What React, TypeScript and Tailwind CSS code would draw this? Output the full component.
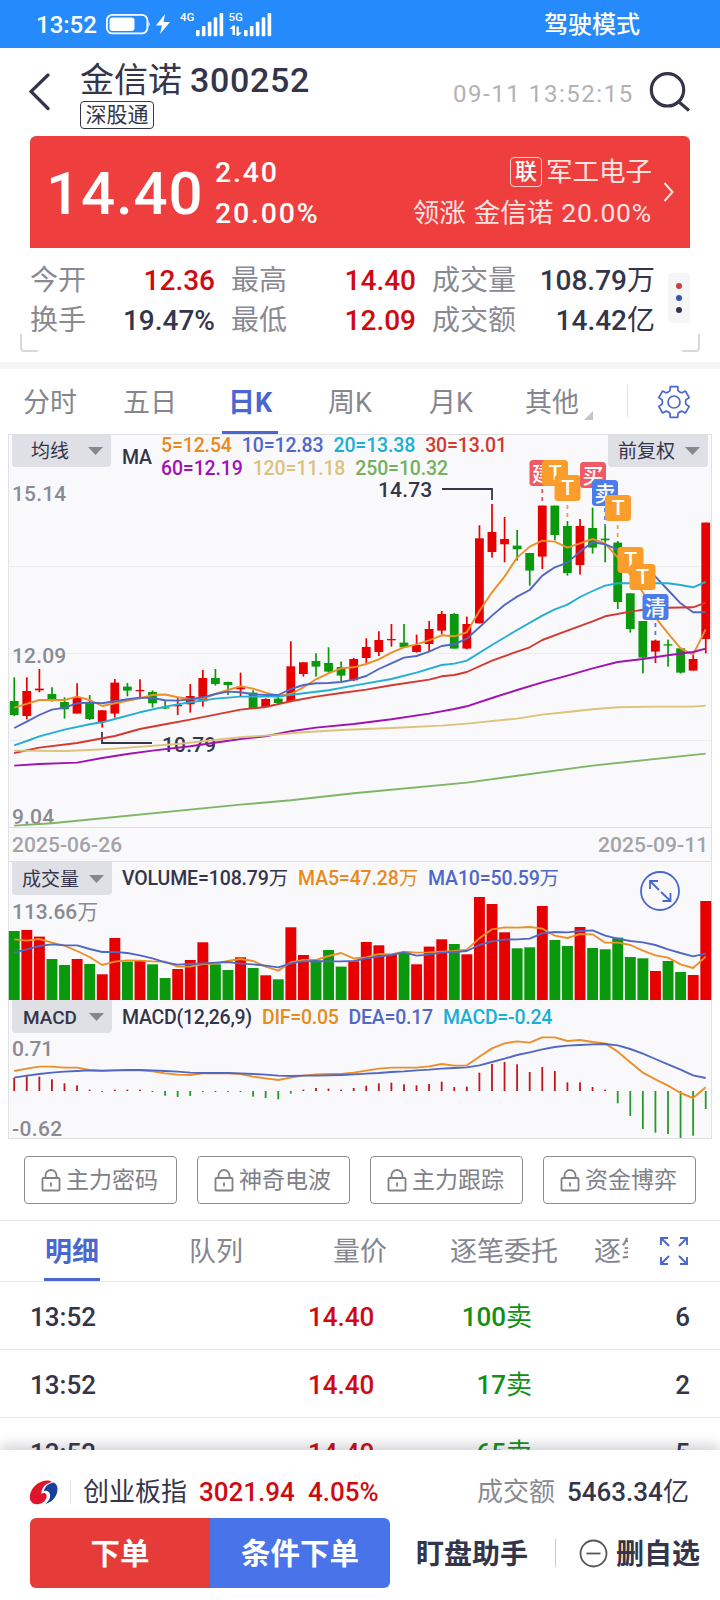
import type { ReactNode } from 'react';
import clsx from 'clsx';

const RED = '#e60000';
const GREEN = '#0a980c';
const ORANGE = '#ec8f28';
const BLUE = '#5068c4';
const CYAN = '#23aed2';

const X0 = 14.2;
const STEP = 12.573;
const cx = (i: number) => X0 + i * STEP;

// [up, high, body top, body bottom, low]
const candles: [number, number, number, number, number][] = [
  [0, 677.3, 701, 715, 716], [1, 677.3, 691, 716, 719.3], [1, 669, 688.6, 690.3, 692.3], [0, 687.3, 694, 699, 701.6],
  [0, 697.3, 702, 709.3, 718.6], [1, 683.3, 697.3, 713.6, 713.6], [0, 695, 702.3, 719, 720], [1, 710.3, 710.3, 722, 727.6],
  [1, 679, 682.6, 713.6, 717.6], [0, 683, 686.6, 690.6, 696.3], [1, 679.3, 690, 691.2, 697], [0, 690.3, 692, 703.3, 707.6],
  [0, 700, 707.3, 708.5, 709], [1, 697.3, 705, 706.3, 715], [1, 684, 696, 704.3, 712.6], [1, 670, 678, 701.3, 706.6],
  [0, 669, 678, 684, 685.6], [0, 681.6, 682, 685, 695], [1, 672.6, 686.8, 689.3, 696], [0, 690.3, 692.6, 708, 708.6],
  [1, 698.3, 699, 707, 707], [0, 696.6, 698.6, 703, 704.6], [1, 641.3, 666.3, 701, 702.3], [1, 662.3, 662.3, 674, 676.6],
  [0, 653.3, 661, 666.6, 676.6], [0, 647.3, 663, 671.6, 672.6], [0, 661.6, 667, 675.6, 681.6], [1, 658, 659, 680.3, 681],
  [1, 638.3, 647, 658, 663.3], [1, 631.3, 640, 652, 656], [1, 624, 639, 640.3, 646.6], [0, 624, 642.6, 647.3, 647.6],
  [1, 634.6, 645, 652, 652.6], [1, 621, 629, 644, 651.6], [1, 611, 614, 630.6, 634.3], [0, 613, 614, 648.6, 648.6],
  [1, 616.6, 624, 648.6, 649.3], [1, 525.3, 538.3, 623.3, 623.3], [1, 504, 532, 552, 557.6], [1, 517, 539, 544.3, 562.3],
  [0, 530, 545.6, 549.3, 560.6], [0, 553, 553, 570.6, 585.6], [1, 505.6, 505.6, 556.6, 569], [0, 505.6, 505.6, 535, 540.3],
  [0, 521, 526, 573, 575.6], [1, 519, 526, 565, 574.6], [0, 507.6, 528, 547.6, 553.6], [0, 526, 538.6, 540.3, 562.3],
  [0, 541, 542.6, 602, 609], [0, 593.3, 593.3, 629, 632.6], [0, 621, 621, 657.6, 673.3], [1, 639.6, 640.6, 651.6, 663],
  [0, 639.6, 644.3, 645.6, 666.6], [0, 647.6, 648.3, 672.6, 673.6], [1, 654, 659, 670.6, 670.6], [1, 522.6, 522.6, 639, 653.3],
];

type Point = [number, number];

const ma5: Point[] = [
  [0, 707.6], [2, 700], [4, 700], [5, 696.6], [6, 700], [7, 706], [8, 703.3], [10, 698.3], [11, 695], [12, 694.5], [13, 697.3], [14, 699],
  [15, 698.6], [16, 694], [17, 690], [18, 686.3], [19, 688.6], [20, 692.6], [21, 695.6], [22, 694], [23, 687.3], [24, 679.3],
  [25, 673.3], [26, 668.3], [27, 667.3], [28, 664], [29, 659.3], [30, 652.6], [31, 647.3], [32, 644.3], [33, 640.3], [34, 635.3],
  [35, 636.3], [36, 632.3], [37, 611], [38, 592.3], [39, 576.6], [40, 557.6], [41, 546.6], [42, 540.6], [43, 541.6], [44, 547.6],
  [45, 543.3], [46, 539], [47, 543.3], [48, 557.6], [49, 575], [50, 592.3], [51, 617.3], [52, 633.3], [53, 648.3], [54, 654.6], [55, 629.3],
];
const ma10: Point[] = [
  [0, 728], [1, 721.6], [2, 715], [3, 709.6], [4, 707.6], [5, 703.3], [6, 702.6], [7, 703.3], [8, 701.3], [9, 699.3], [10, 697.6],
  [11, 698], [12, 700.3], [13, 700.6], [14, 699.3], [15, 697.3], [16, 694], [17, 691.6], [18, 692.3], [19, 694.3], [20, 695], [21, 695],
  [22, 689], [23, 685], [24, 683.3], [25, 683], [26, 682], [27, 679.6], [28, 676], [29, 669], [30, 663.3], [31, 657.6], [32, 656],
  [33, 651.6], [34, 646], [35, 644.3], [36, 638.6], [37, 627.3], [38, 615.6], [39, 605], [40, 596.6], [41, 590], [42, 575.6],
  [43, 567.3], [44, 562.6], [45, 551.6], [46, 542.3], [47, 544.3], [48, 549.3], [49, 558.3], [50, 567.3], [51, 576.6], [52, 590],
  [53, 603.3], [54, 612.3], [55, 612.3],
];
const ma20: Point[] = [
  [0, 745.3], [1, 741], [2, 736.3], [4, 729.6], [6, 724.3], [7, 722.3], [8, 719], [10, 712.3], [12, 706.6], [14, 702.3], [16, 698.6],
  [18, 696.6], [21, 696.6], [23, 693.3], [25, 690.3], [27, 685.6], [30, 679], [32, 672.6], [34, 665], [35, 663.6], [36, 660.6],
  [38, 645], [40, 630], [42, 615.6], [43, 609.3], [44, 604.6], [45, 597], [46, 591], [47, 585.6], [48, 583.3], [52, 583.3],
  [53, 585], [54, 587.3], [55, 582],
];
const ma30: Point[] = [
  [0, 753], [2, 747.6], [5, 743], [8, 736], [10, 729], [12, 724.3], [14, 719.6], [16, 714.6], [18, 709.6], [20, 707], [22, 701.3],
  [24, 696.6], [26, 693], [28, 689.6], [30, 685.3], [33, 679.6], [34, 676.3], [35, 675], [36, 672], [38, 660.6], [40, 651.6],
  [41, 647.3], [42, 640], [44, 630.6], [46, 621.3], [47, 616.3], [49, 611.6], [51, 608], [54, 607.3], [55, 602.6],
];
const ma60: Point[] = [
  [0, 765.6], [2, 764], [5, 762.6], [7, 758], [9, 754], [11, 750.6], [14, 746.3], [18, 739], [20, 736.3], [22, 731.3], [24, 727.6],
  [27, 724], [30, 719.3], [33, 713.6], [35, 709], [36, 706.3], [38, 698], [40, 690], [42, 682.3], [44, 675.6], [46, 668.3],
  [48, 662], [50, 659], [52, 655.3], [54, 652], [55, 648.6],
];
const ma120: Point[] = [
  [0, 750.6], [4, 751], [6, 750], [8, 748.6], [13, 744], [18, 737.3], [20, 735.6], [23, 732.3], [26, 730], [30, 728], [34, 725.6],
  [36, 723.6], [40, 718.6], [42, 714.6], [44, 712], [46, 709.3], [48, 707.3], [51, 706.6], [54, 706.6], [55, 705.6],
];
const ma250: Point[] = [[0, 825.6], [3, 823.3], [18, 804.6], [22, 800.3], [27, 793.3], [36, 782.6], [46, 765.6], [55, 753.6]];

// [up, bar top]
const volumes: Point[] = [
  [0, 931], [1, 930], [1, 936.6], [0, 959], [0, 965], [1, 959], [0, 964], [1, 974.3], [1, 938], [0, 961.6], [1, 960.6], [0, 964.3],
  [0, 978], [1, 969], [1, 960], [1, 942.3], [0, 964.3], [0, 970], [1, 957.3], [0, 968], [1, 975.3], [0, 979.3], [1, 927.3],
  [1, 955], [0, 961.3], [0, 950], [0, 966.6], [1, 961.3], [1, 942], [1, 945.3], [1, 954], [0, 952.6], [1, 964.3], [1, 946.6],
  [1, 939.3], [0, 944], [1, 954.3], [1, 897], [1, 904], [1, 932.3], [0, 948.3], [0, 947.3], [1, 906], [0, 940], [0, 946],
  [1, 927], [0, 948], [0, 949.3], [0, 937.6], [0, 957], [0, 958.3], [1, 971], [0, 961], [0, 972], [1, 975], [1, 901],
];

// the series below are in thirds of a pixel, measured down from y = 850
const third = (values: number[]): Point[] => values.map((v, i) => [i, 850 + v / 3]);

const volMa5 = third([
  268, 272, 267, 278, 287, 303, 321, 345, 335, 331, 332, 334, 335, 350, 350, 342, 341, 333, 327, 333, 350, 362, 337, 330, 330, 318,
  309, 325, 322, 312, 313, 305, 308, 307, 305, 303, 299, 265, 238, 232, 233, 231, 236, 257, 264, 252, 253, 278, 278, 285, 302, 316,
  323, 343, 354, 320,
]);
const volMa10 = third([
  308, 298, 288, 283, 286, 286, 297, 306, 306, 309, 316, 325, 337, 344, 342, 340, 338, 336, 341, 343, 347, 352, 340, 334, 333, 334,
  334, 333, 325, 320, 315, 307, 317, 314, 308, 306, 303, 285, 274, 269, 268, 266, 250, 246, 247, 243, 241, 257, 266, 273, 277, 285,
  298, 309, 319, 311,
]);
const dif = third([
  663, 656, 650, 650, 653, 653, 660, 663, 661, 661, 661, 664, 670, 674, 675, 670, 669, 670, 672, 680, 685, 690, 683, 677, 673, 672,
  672, 668, 662, 656, 653, 653, 653, 649, 642, 647, 646, 620, 595, 580, 574, 578, 562, 562, 573, 570, 576, 580, 605, 637, 668, 688,
  707, 729, 744, 712,
]);
const dea = third([
  683, 677, 672, 668, 665, 663, 661, 662, 661, 660, 660, 661, 663, 665, 668, 669, 669, 669, 670, 672, 674, 677, 678, 677, 677, 676,
  675, 673, 671, 669, 666, 664, 661, 659, 656, 654, 652, 646, 636, 626, 615, 607, 598, 591, 587, 585, 583, 582, 586, 597, 611, 627,
  643, 659, 676, 684,
]);
const macd = [
  684, 678, 680, 688, 700, 706, 719, 726, 719, 719, 719, 726, 737, 741, 738, 726, 726, 726, 726, 740, 744, 748, 731, 719, 714, 716,
  719, 714, 707, 700, 698, 703, 706, 702, 695, 711, 710, 668, 642, 636, 643, 666, 651, 663, 697, 697, 711, 719, 760, 798, 837, 848,
  852, 864, 857, 777,
].map((v) => 850 + v / 3);
const MACD_ZERO = 1091;

const markers = [
  { label: '建', x: 529.5, y: 460, color: '#f05a63' },
  { label: 'T', x: 542, y: 460, color: '#fb9d2b' },
  { label: 'T', x: 554.5, y: 475, color: '#fb9d2b' },
  { label: '买', x: 580, y: 462, color: '#f05a63' },
  { label: '卖', x: 592, y: 480, color: '#4a7ceb' },
  { label: 'T', x: 605, y: 495, color: '#fb9d2b' },
  { label: 'T', x: 617.5, y: 547, color: '#fb9d2b' },
  { label: 'T', x: 629.5, y: 564, color: '#fb9d2b' },
  { label: '清', x: 642.5, y: 594, color: '#4a7ceb' },
];

function Line({ points, color }: { points: Point[]; color: string }) {
  return (
    <polyline
      points={points.map(([i, y]) => `${cx(i).toFixed(1)},${y}`).join(' ')}
      fill="none" stroke={color} strokeWidth="1.9" strokeLinejoin="round"
    />
  );
}

function Label({ x, y, w, color = '#8a8a92', children }: { x: number; y: number; w: number; color?: string; children: ReactNode }) {
  return <text x={x} y={y} textLength={w} fill={color} fontSize="21" fontWeight="500">{children}</text>;
}

// medium figures, with the unit after them in the regular weight
function Figure({ value, unit }: { value: string; unit: string }) {
  return <>{value}<span className="font-normal">{unit}</span></>;
}

function Dropdown({ children, className, gap = 'gap-2.5' }: { children: ReactNode; className?: string; gap?: string }) {
  return (
    <div className={clsx('flex h-[33px] shrink-0 items-center justify-end rounded-b bg-[#dfe0e5] pr-2 text-[19px] tracking-normal text-[#34354a]', gap, className)}>
      <span className="pt-0.5">{children}</span>
      <svg width="15" height="8" viewBox="0 0 15 8"><path d="M0 0h15L7.500 8z" fill="#86868c" /></svg>
    </div>
  );
}

function PriceChart() {
  return (
    <svg className="absolute left-0 top-0" width="704" height="427" viewBox="8 434 704 427">
      {[566.5, 653.5, 740.5].map((y) => <path key={y} d={`M8 ${y}H711`} stroke="#ededf0" />)}
      <path d="M8 827.500H711" stroke="#dfdfe2" />
      <Label x={12} y={501} w={54}>15.14</Label>
      <Label x={12} y={662.5} w={54}>12.09</Label>
      <Label x={12} y={824} w={42}>9.04</Label>
      <Label x={378} y={497} w={54} color="#34354a">14.73</Label>
      <Label x={162} y={752} w={54} color="#34354a">10.79</Label>
      <Label x={12} y={852} w={110} color="#a3a3a8">2025-06-26</Label>
      <Label x={598} y={852} w={110} color="#a3a3a8">2025-09-11</Label>
      <path d="M442 489H492V500M102 732V743H152" fill="none" stroke="#34354a" strokeWidth="1.8" />
      {candles.map(([up, high, top, bottom, low], i) => (
        <g key={i} fill={up ? RED : GREEN}>
          <rect x={cx(i) - 0.8} y={high} width="1.7" height={low - high} />
          <rect x={cx(i) - 4.4} y={top} width="8.8" height={bottom - top} />
        </g>
      ))}
      <Line points={ma5} color={ORANGE} />
      <Line points={ma10} color={BLUE} />
      <Line points={ma20} color={CYAN} />
      <Line points={ma30} color="#d5382f" />
      <Line points={ma60} color="#a012b4" />
      <Line points={ma120} color="#dcc27c" />
      <Line points={ma250} color="#7eb567" />
      <g fill="none" strokeWidth="1.8" strokeDasharray="4 4">
        <path d="M542.300 489V505" stroke="#e0566a" />
        <path d="M567.400 505V519M617.700 525V539" stroke="#f0a04a" />
        <path d="M605 508V526M655.400 623V638" stroke="#4a7ceb" />
      </g>
      {markers.map(({ label, x, y, color }, i) => (
        <g key={i}>
          <rect x={x} y={y} width="26" height="26" rx="3.5" fill={color} />
          <text x={x + 13} y={y + (label === 'T' ? 19.5 : 20.5)} textAnchor="middle" fill="#fff" fontSize="21" fontWeight="500">{label}</text>
        </g>
      ))}
    </svg>
  );
}

function VolumeChart() {
  return (
    <svg className="absolute -top-px left-0" width="704" height="139" viewBox="8 861 704 139">
      <Label x={12} y={918.5} w={86}>
        113.66<tspan fontWeight="400">万</tspan>
      </Label>
      {volumes.map(([up, top], i) => (
        <rect key={i} x={cx(i) - 5.4} y={top} width="10.9" height={1000 - top} fill={up ? RED : GREEN} />
      ))}
      <Line points={volMa5} color={ORANGE} />
      <Line points={volMa10} color={BLUE} />
      <g fill="none" stroke="#4b67cf" strokeWidth="1.8">
        <circle cx="660" cy="891" r="19" fill="#f9f9fc" />
        <path d="M650 889V881H658M650 881L659 890M661 892L670.500 901M670.500 893V901H662.500" />
      </g>
    </svg>
  );
}

function MacdChart() {
  return (
    <svg className="absolute left-0 top-0" width="704" height="139" viewBox="8 1000 704 139">
      <Label x={12} y={1055.7} w={41}>0.71</Label>
      <Label x={12} y={1135.5} w={50}>-0.62</Label>
      {macd.map((y, i) => (
        <rect
          key={i} x={cx(i) - 0.9} y={Math.min(y, MACD_ZERO)} width="1.8" height={Math.abs(y - MACD_ZERO)}
          fill={y < MACD_ZERO ? '#c2151c' : '#259a2b'}
        />
      ))}
      <Line points={dif} color={ORANGE} />
      <Line points={dea} color={BLUE} />
    </svg>
  );
}

const gearPath = (() => {
  const at = (r: number, deg: number) => {
    const a = (deg * Math.PI) / 180;
    return `${(17 + r * Math.cos(a)).toFixed(2)} ${(17 + r * Math.sin(a)).toFixed(2)}`;
  };
  let d = '';
  for (let k = 0; k < 6; k++) {
    const t = k * 60 - 90;
    d += `${k ? 'L' : 'M'}${at(12.2, t - 19)}L${at(15.8, t - 14)}L${at(15.8, t + 14)}L${at(12.2, t + 19)}Q${at(11, t + 30)} ${at(12.2, t + 41)}`;
  }
  return d + 'Z';
})();

function StatusBar() {
  return (
    <div className="flex h-12 items-center bg-[#258afc] pl-9 pt-px font-medium text-white">
      <span className="w-[70px] text-2xl leading-none">13:52</span>
      <svg className="-mt-px" width="167" height="48" viewBox="106 0 167 48" fill="#fff">
        <rect x="106.900" y="14.900" width="40.500" height="18.500" rx="5.500" fill="none" stroke="#fff" strokeWidth="1.800" />
        <rect x="109.500" y="17.500" width="25" height="13.500" rx="3" />
        <path d="M148.500 21.500q2.500 2.700 0 5.400zM165 14L156 25.500h6L160 34l10-12h-6.500z" />
        <text x="180" y="21" fontSize="11.500" fontWeight="500">4G</text>
        <text x="228.500" y="21" fontSize="11.500" fontWeight="500">5G</text>
        <path d="M229.500 29l3.500-3.500h2V35h-2.500v-6zM236.500 26.500h2.300v6h3L238.300 36h-1.800z" />
        {[30, 26, 21.7, 17.3, 13].map((y, i) => (
          <g key={y}>
            <rect x={196 + i * 5.9} y={y} width="3.600" height={36.3 - y} rx="1" />
            <rect x={244 + i * 5.9} y={y} width="3.600" height={36.3 - y} rx="1" />
          </g>
        ))}
      </svg>
      <span className="ml-[271px] text-2xl leading-none">驾驶模式</span>
    </div>
  );
}

function Header() {
  return (
    <header className="flex h-[88px] text-[#34354a]">
      <svg className="ml-[28px] mt-[25px]" width="22" height="38" viewBox="0 0 22 38" fill="none" stroke="currentColor" strokeWidth="3.200">
        <path d="M20 2L3 18.500L20 35.500" strokeLinecap="round" />
      </svg>
      <div className="ml-[30px] w-[360px]">
        <div className="flex h-[52px] items-center pt-[11px] text-[34px] leading-none">
          <span>金信诺</span>
          <span className="ml-2 font-medium tracking-[0.7px]">300252</span>
        </div>
        <div className="mt-px inline-flex h-[28px] w-[74px] items-center justify-center rounded border-[1.5px] border-[#34354a] text-[21px] leading-none">深股通</div>
      </div>
      <span className="mt-[33px] w-[198px] pl-[13px] text-2xl leading-[26px] tracking-[1.55px] whitespace-nowrap text-[#b2b2b6]">09-11 13:52:15</span>
      <svg className="ml-[11px] mt-6" width="42" height="42" viewBox="0 0 42 42" fill="none" stroke="currentColor" strokeWidth="3.200">
        <circle cx="18.500" cy="17.800" r="16.200" />
        <path d="M30 30L40 38.500" />
      </svg>
    </header>
  );
}

function QuoteCard() {
  return (
    <div className="mx-[30px] flex h-28 rounded-t-md bg-[#ee3e3e] text-white">
      <div className="w-[183px] pl-4 pt-[28px] text-[60px] leading-[60px] font-medium tracking-[0.9px]">14.40</div>
      <div className="w-[140px] pl-[2px] pt-[21px] text-[28.5px] leading-[32px] font-medium tracking-[1.8px]">
        <div>2.40</div>
        <div className="mt-[9px]">20.00%</div>
      </div>
      <div className="w-[299px] pt-[19px] text-right text-[26.5px] leading-[34px] text-[#ffe3e0]">
        <div className="flex items-center justify-end gap-1">
          <span className="flex h-[30px] w-8 items-center justify-center rounded border border-[#ffd0cc] text-[22px] font-medium text-white">联</span>
          <span>军工电子</span>
        </div>
        <div className="mt-[7px] flex justify-end gap-2">
          <span>领涨</span><span>金信诺</span><span className="tracking-[0.8px]">20.00%</span>
        </div>
      </div>
      <svg className="ml-[11px] mt-[46px]" width="12" height="20" viewBox="0 0 12 20" fill="none" stroke="#ffe3e0" strokeWidth="2">
        <path d="M1.500 1L9.500 10L1.500 19" />
      </svg>
    </div>
  );
}

const stats = [
  ['今开', '12.36', '', true], ['最高', '14.40', '', true], ['成交量', '108.79', '万', false],
  ['换手', '19.47%', '', false], ['最低', '12.09', '', true], ['成交额', '14.42', '亿', false],
] as const;

function Stats() {
  return (
    <div className="relative flex h-[114px] pl-[30px] pt-[13px]">
      <div className="grid h-20 grid-cols-[185px_185px_223px] gap-x-4 text-[28px] leading-10">
        {stats.map(([name, value, unit, red]) => (
          <div key={name} className="flex justify-between whitespace-nowrap">
            <span className="text-[#8a8a92]">{name}</span>
            <span className={clsx('font-medium', red ? 'text-[#cf0a10]' : 'text-[#34354a]')}><Figure value={value} unit={unit} /></span>
          </div>
        ))}
      </div>
      <div className="ml-[13px] mt-3 flex h-[50px] w-[22px] flex-col items-center justify-center gap-1.5 rounded bg-[#f6f6f8]">
        <i className="size-1.5 rounded-full bg-[#c9403c]" />
        <i className="size-1.5 rounded-full bg-[#3557ab]" />
        <i className="size-1.5 rounded-full bg-[#34354a]" />
      </div>
      <i className="absolute bottom-[10px] left-5 h-[18px] w-[18px] rounded-bl-sm border-b-2 border-l-2 border-[#d9d9dc]" />
      <i className="absolute bottom-[10px] right-5 h-[18px] w-[18px] rounded-br-sm border-b-2 border-r-2 border-[#d9d9dc]" />
    </div>
  );
}

function PeriodTabs() {
  return (
    <nav className="flex h-[65px] items-stretch pl-[23px] text-[27px] leading-[68px] text-[#86868e]">
      <span className="w-[100px]">分时</span>
      <span className="w-[99px]">五日</span>
      <span className="mr-[50px] flex w-[56px] justify-center border-b-[3px] border-[#4b67cf] font-bold text-[#4b67cf]">日K</span>
      <span className="w-[101px]">周K</span>
      <span className="w-[96px]">月K</span>
      <span>其他</span>
      <svg className="ml-[5px] mt-[42px]" width="9" height="9" viewBox="0 0 9 9"><path d="M9 0V9H0z" fill="#c4c4c8" /></svg>
      <i className="ml-[34px] mt-4 h-8 w-px bg-[#e2e2e5]" />
      <svg className="ml-[29px] mt-4" width="34" height="34" viewBox="0 0 34 34" fill="none" stroke="#4b67cf" strokeWidth="1.700" strokeLinejoin="round">
        <path d={gearPath} />
        <circle cx="17" cy="17" r="6" />
      </svg>
    </nav>
  );
}

function Charts() {
  return (
    <section className="ml-2 w-[704px] bg-[#f9f9fc] text-[19.5px] leading-none font-medium tracking-[-0.15px] outline outline-1 -outline-offset-1 outline-[#e1e1e4]">
      <div className="relative h-[427px]">
        <PriceChart />
        <div className="relative flex pl-1">
          <Dropdown className="w-[99px] font-normal" gap="gap-[19px]">均线</Dropdown>
          <span className="ml-[11px] mt-[14px] w-[39px] text-[#34354a]">MA</span>
          <div className="w-[447px] pt-px">
            <div className="flex h-[22px] items-center gap-[10px]">
              <span className="text-[#e88a1c]">5=12.54</span>
              <span className="text-[#4f68c8]">10=12.83</span>
              <span className="text-[#1ab0d4]">20=13.38</span>
              <span className="text-[#d23a30]">30=13.01</span>
            </div>
            <div className="flex h-6 items-center gap-[10px]">
              <span className="text-[#a012b4]">60=12.19</span>
              <span className="text-[#dcc27c]">120=11.18</span>
              <span className="text-[#74b05c]">250=10.32</span>
            </div>
          </div>
          <Dropdown className="w-[100px] font-normal">前复权</Dropdown>
        </div>
      </div>
      <div className="relative h-[139px] border-t border-[#dfdfe2]">
        <VolumeChart />
        <div className="relative flex gap-[10px] pl-1 leading-[33px]">
          <Dropdown className="w-[100px] font-normal">成交量</Dropdown>
          <span className="text-[#34354a]"><Figure value="VOLUME=108.79" unit="万" /></span>
          <span className="text-[#e88a1c]"><Figure value="MA5=47.28" unit="万" /></span>
          <span className="text-[#4f68c8]"><Figure value="MA10=50.59" unit="万" /></span>
        </div>
      </div>
      <div className="relative h-[139px] tracking-[-0.25px]">
        <MacdChart />
        <div className="relative flex gap-[10px] pl-1 leading-[35px]">
          <Dropdown className="w-[100px]" gap="gap-3">MACD</Dropdown>
          <span className="text-[#34354a]">MACD(12,26,9)</span>
          <span className="text-[#e88a1c]">DIF=0.05</span>
          <span className="text-[#4f68c8]">DEA=0.17</span>
          <span className="text-[#1ab0d4]">MACD=-0.24</span>
        </div>
      </div>
    </section>
  );
}

function LockedTools() {
  return (
    <div className="flex h-[82px] gap-5 border-b border-[#e6e6e8] pl-6 pt-[17px]">
      {['主力密码', '神奇电波', '主力跟踪', '资金博弈'].map((name) => (
        <div key={name} className="flex h-12 w-[153px] items-center gap-[5px] rounded border-[1.5px] border-[#8b8b92] pl-4 text-[23px] leading-none whitespace-nowrap text-[#808088]">
          <svg width="20" height="23" viewBox="0 0 20 23" fill="none" stroke="currentColor" strokeWidth="1.800">
            <rect x="1.500" y="9" width="17" height="12.500" rx="1" />
            <path d="M4.500 9V6.500a5.500 5.500 0 0 1 11 0V9M10 13.500v4" />
          </svg>
          <span className="pt-px">{name}</span>
        </div>
      ))}
    </div>
  );
}

function DetailTabs() {
  return (
    <nav className="flex h-[61px] border-b border-[#e6e6e8] text-[27px] leading-[62px] whitespace-nowrap text-[#86868e]">
      <span className="ml-11 w-14 border-b-[3px] border-[#4b67cf] text-center font-bold text-[#4b67cf]">明细</span>
      <span className="ml-[89px] w-[144px]">队列</span>
      <span className="w-[117px]">量价</span>
      <span className="w-[144px]">逐笔委托</span>
      <span className="w-[34px] overflow-hidden">逐笔</span>
      <svg className="ml-[31px] mt-[15px]" width="30" height="30" viewBox="0 0 30 30" fill="none" stroke="#4b67cf" strokeWidth="1.900">
        <path d="M2 9V2H9M2 2L10 10M21 2H28V9M28 2L20 10M2 21V28H9M2 28L10 20M21 28H28V21M28 28L20 20" />
      </svg>
    </nav>
  );
}

const trades = [['13:52', '14.40', '100', '6'], ['13:52', '14.40', '17', '2'], ['13:52', '14.40', '65', '5']];

function Trades() {
  return (
    <div className="h-[168px] overflow-hidden text-[26px] leading-[70px] font-medium text-[#34354a]">
      {trades.map(([time, price, size, count], i) => (
        <div key={i} className="flex h-[68px] border-b border-[#e8e8ea] px-[30px]">
          <span className="w-[278px]">{time}</span>
          <span className="w-[68px] text-[#cf0a10]">{price}</span>
          <span className="w-[156px] text-right text-[#129015]"><Figure value={size} unit="卖" /></span>
          <span className="flex-1 text-right">{count}</span>
        </div>
      ))}
    </div>
  );
}

function BottomBar() {
  return (
    <footer className="relative h-[150px] bg-white text-[#34354a] shadow-[0_-5px_12px_rgba(60,60,80,0.22)]">
      <div className="flex h-[68px] items-center pl-[29px] pt-4 text-[26px] leading-none">
        <svg width="30" height="27" viewBox="0 0 30 27">
          <path d="M17 1.500C8 2.500 1 10 .8 18c0 5.500 4.200 8 9 7c6-1.200 9-6 7.500-9.500c-.8-1.800-3.300-2-5-.5C12.500 9 16 4.500 23 3C21 1.500 19 1.300 17 1.500z" fill="#e0142a" />
          <path d="M24.500 3.500c3.500 1.500 4.700 5 3.700 9.500c-1.400 6-6 10.500-12 12c4-3 5.700-7 4.500-10.500c-1-2.500-3.500-3.200-6-2.200c1-4.500 4.500-7.800 9.800-8.800z" fill="#16409a" />
        </svg>
        <i className="ml-[11px] h-6 w-px bg-[#e3e3e6]" />
        <span className="ml-[12px] w-[116px]">创业板指</span>
        <span className="w-[109px] font-medium text-[#cf0a10]">3021.94</span>
        <span className="w-[169px] font-medium text-[#cf0a10]">4.05%</span>
        <span className="w-[90px] text-[#8a8a92]">成交额</span>
        <span className="font-medium whitespace-nowrap"><Figure value="5463.34" unit="亿" /></span>
      </div>
      <div className="flex h-[70px] items-center pl-[30px] text-[28px] font-bold">
        <div className="flex h-full w-[360px] overflow-hidden rounded-md text-[29.5px] leading-[72px] text-white">
          <span className="w-1/2 bg-[#e53c3a] text-center">下单</span>
          <span className="w-1/2 bg-[#4974e9] text-center">条件下单</span>
        </div>
        <span className="ml-[26px] w-[139px] pt-[3px]">盯盘助手</span>
        <i className="h-7 w-px bg-[#c9c9ce]" />
        <svg className="ml-[23px] mt-px" width="29" height="29" viewBox="0 0 29 29" fill="none" stroke="#55565f" strokeWidth="1.800">
          <circle cx="14.500" cy="14.500" r="13" />
          <path d="M7.500 14.500H21.500" />
        </svg>
        <span className="ml-[8px] pt-[3px] whitespace-nowrap">删自选</span>
      </div>
    </footer>
  );
}

function App() {
  return (
    <div className="h-[1600px] w-[720px] overflow-hidden bg-white [font-family:Roboto,'Noto_Sans_CJK_SC',sans-serif]">
      <StatusBar />
      <Header />
      <QuoteCard />
      <Stats />
      <div className="h-[7px] bg-[#f5f5f6]" />
      <PeriodTabs />
      <Charts />
      <LockedTools />
      <DetailTabs />
      <Trades />
      <BottomBar />
    </div>
  );
}

export default App;
